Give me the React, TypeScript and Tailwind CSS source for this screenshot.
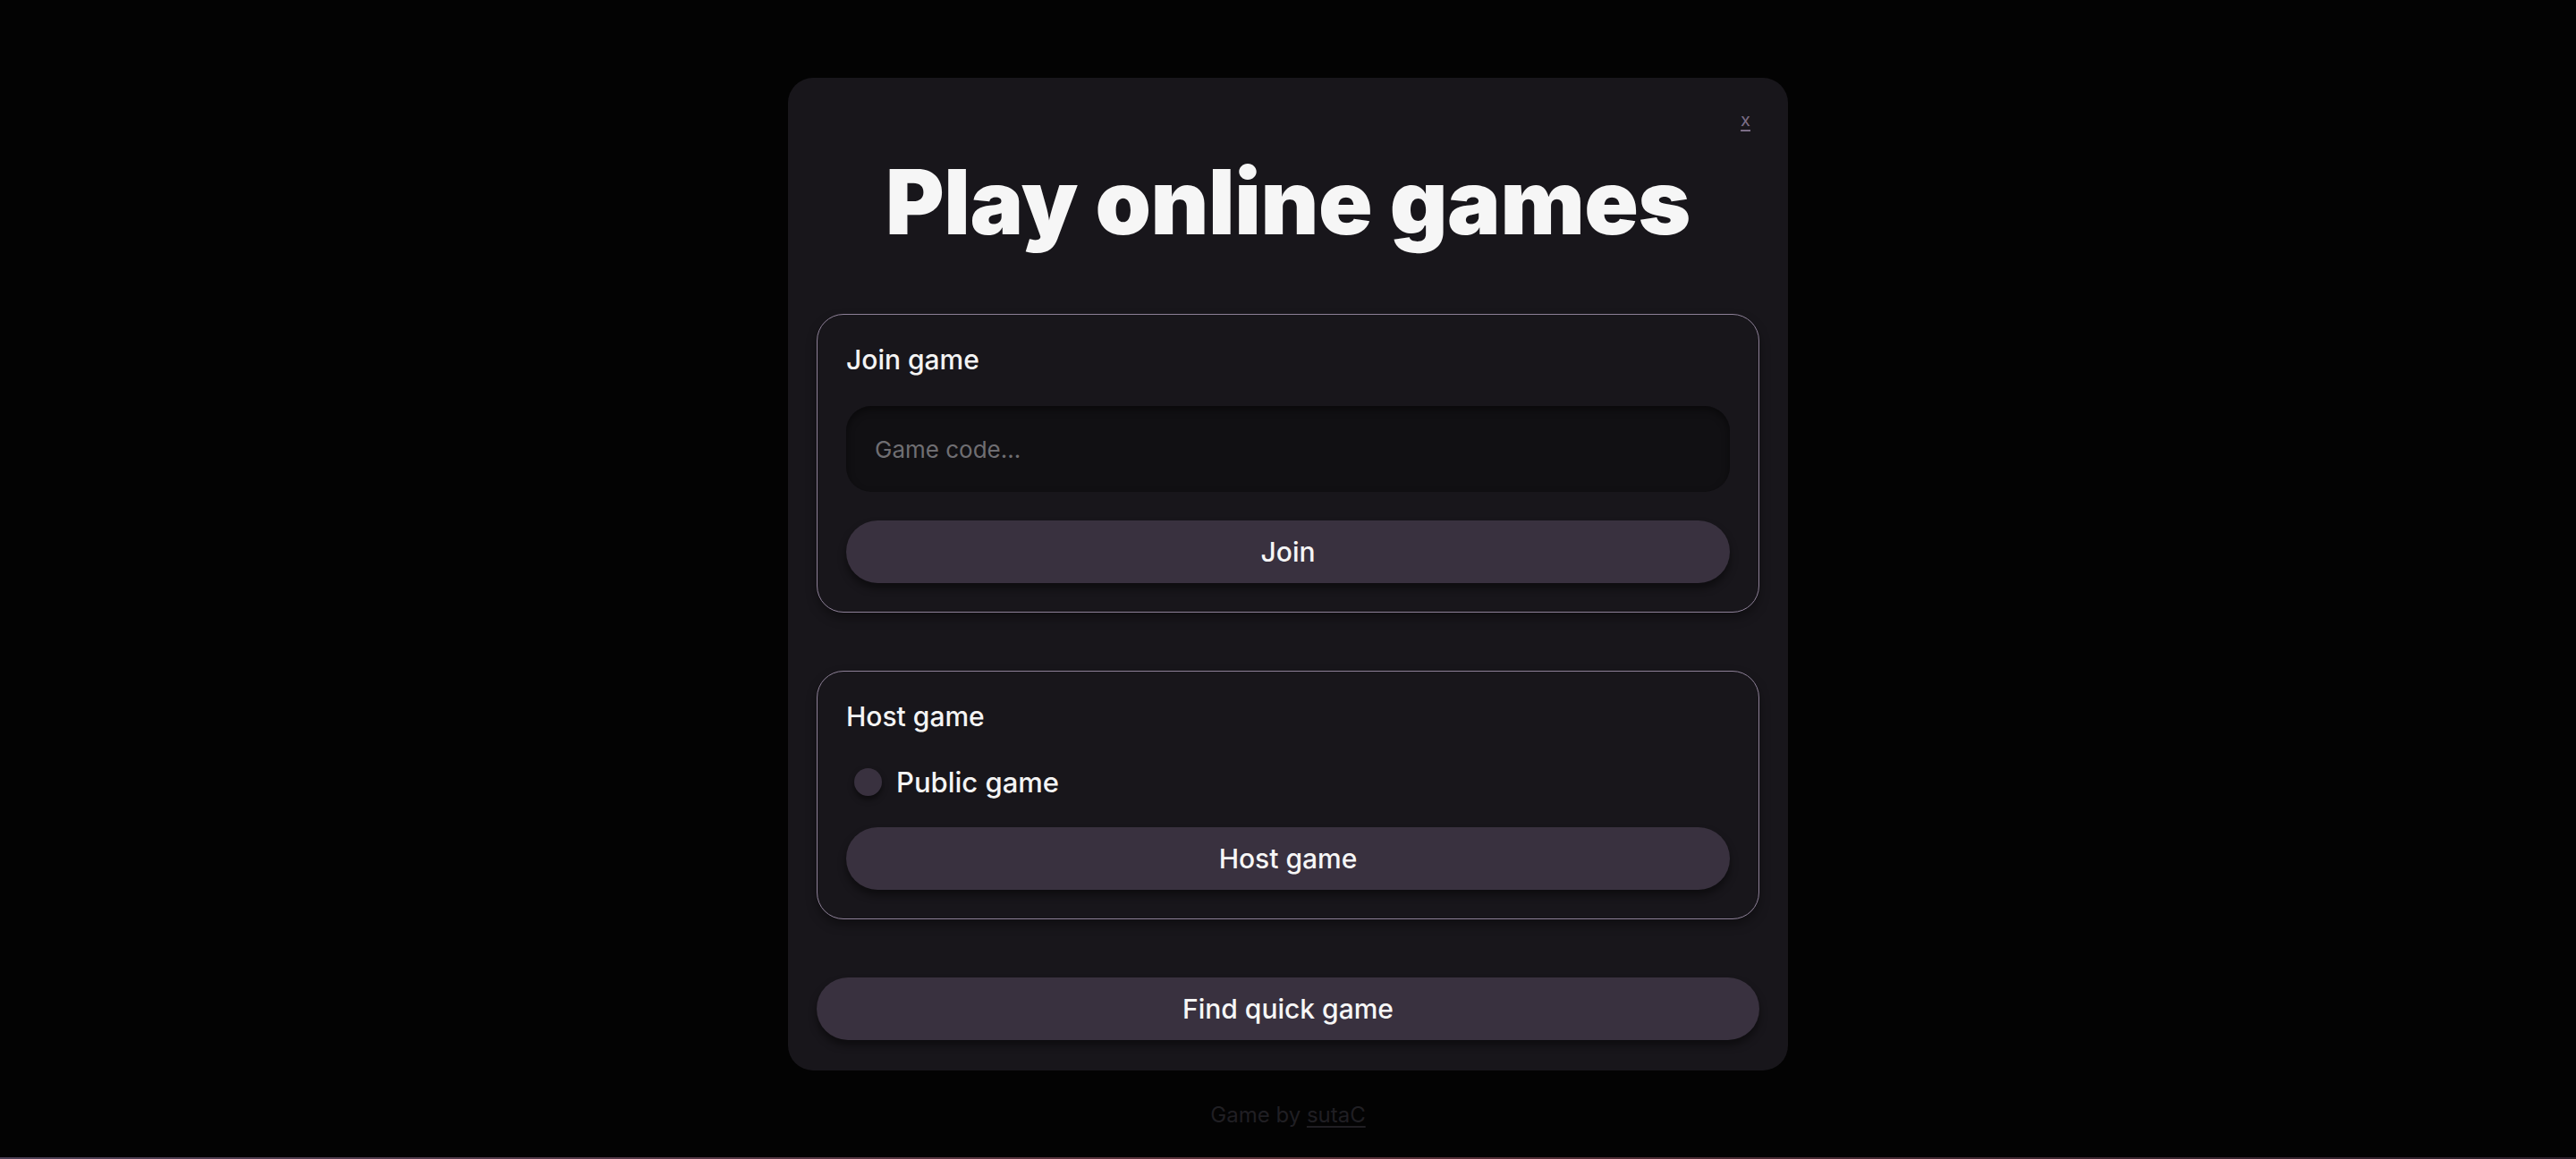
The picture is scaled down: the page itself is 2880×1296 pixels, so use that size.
export default function App() {
  return (
    <div
      className="min-h-[1296px] bg-[#030303] flex flex-col"
      style={{ fontFamily: "Inter, 'Noto Sans', sans-serif" }}
    >
      <div className="flex-1 flex flex-col items-center pt-[87px]">
        <div className="w-[1118px] bg-[#18161b] rounded-[28px] px-8 pt-8 pb-[34px] flex flex-col">
          <div className="flex justify-end h-[30px] pr-[10px]">
            <a
              href="#"
              className="text-[20px] leading-[30px] text-[#7c6e87] underline underline-offset-4"
            >
              x
            </a>
          </div>
          <h1 className="mt-[27px] text-center text-[100px] leading-none font-black tracking-[-0.4px] text-[#f6f6f6]">
            Play online games
          </h1>

          <div className="mt-[75px] flex flex-col gap-[65px]">
            <section className="border-[1.5px] border-[#8d8097] rounded-[30px] px-8 pt-[28px] pb-8 shadow-[0_6px_12px_rgba(0,0,0,0.35)]">
              <h2 className="text-[30px] leading-[45px] font-medium text-[#f4f4f4]">
                Join game
              </h2>
              <input
                placeholder="Game code..."
                className="mt-[29px] w-full h-[96px] rounded-[28px] bg-[#111013] px-8 text-[26px] text-[#eee] placeholder:text-[#6f6e72] outline-none shadow-[inset_0_4px_8px_rgba(0,0,0,0.45)]"
              />
              <button className="mt-8 w-full h-[70px] rounded-full bg-[#39313f] text-[30px] font-medium text-[#f6f6f6] shadow-[0_6px_10px_rgba(0,0,0,0.45)]">
                Join
              </button>
            </section>

            <section className="border-[1.5px] border-[#8d8097] rounded-[30px] px-8 pt-[28px] pb-8 shadow-[0_6px_12px_rgba(0,0,0,0.35)]">
              <h2 className="text-[30px] leading-[45px] font-medium text-[#f4f4f4]">
                Host game
              </h2>
              <label className="mt-[28px] h-[45px] flex items-center gap-4 pl-[9px]">
                <span className="w-[31px] h-[31px] rounded-full bg-[#39313f] shadow-[0_4px_6px_rgba(0,0,0,0.5)]" />
                <span className="text-[31px] leading-[45px] font-medium text-[#f4f4f4]">
                  Public game
                </span>
              </label>
              <button className="mt-[28px] w-full h-[70px] rounded-full bg-[#39313f] text-[30px] font-medium text-[#f6f6f6] shadow-[0_6px_10px_rgba(0,0,0,0.45)]">
                Host game
              </button>
            </section>
          </div>

          <button className="mt-[65px] w-full h-[70px] rounded-full bg-[#39313f] text-[30px] font-medium text-[#f6f6f6] shadow-[0_6px_10px_rgba(0,0,0,0.45)]">
            Find quick game
          </button>
        </div>

        <p className="mt-8 text-[24px] leading-[36px] text-[#201f23]">
          Game by{" "}
          <a href="#" className="underline underline-offset-4">
            sutaC
          </a>
        </p>
      </div>
      <div className="h-[2px] bg-gradient-to-r from-[#4a4055] via-[#5a3038] to-[#2a1f2a]" />
    </div>
  );
}
